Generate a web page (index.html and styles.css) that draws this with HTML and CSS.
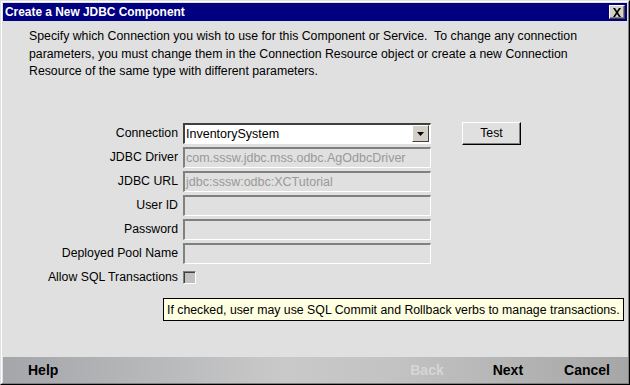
FILE: index.html
```html
<!DOCTYPE html>
<html>
<head>
<meta charset="utf-8">
<link rel="stylesheet" href="styles.css">
</head>
<body>
<div class="window">
  <div class="titlebar">
    <span class="title">Create a New JDBC Component</span>
    <span class="close"><svg width="10" height="9" viewBox="0 0 10 9"><path d="M1 0h2l2 3 2-3h2L6 4.5 9 9H7L5 6 3 9H1l3-4.5z" fill="#000"/></svg></span>
  </div>
  <div class="content">
    <p class="desc">Specify which Connection you wish to use for this Component or Service.&nbsp; To change any connection parameters, you must change them in the Connection Resource object or create a new Connection Resource of the same type with different parameters.</p>
    <div class="form">
      <label class="lbl">Connection</label>
      <div class="field combo"><span class="val">InventorySystem</span><span class="arrow"><svg width="7" height="4" viewBox="0 0 7 4"><path d="M0 0h7L3.5 4z" fill="#000"/></svg></span></div>
      <div class="btncell"><button class="btn">Test</button></div>

      <label class="lbl">JDBC Driver</label>
      <div class="field dis"><span class="val">com.sssw.jdbc.mss.odbc.AgOdbcDriver</span></div>
      <div></div>

      <label class="lbl">JDBC URL</label>
      <div class="field dis"><span class="val">jdbc:sssw:odbc:XCTutorial</span></div>
      <div></div>

      <label class="lbl">User ID</label>
      <div class="field dis"></div>
      <div></div>

      <label class="lbl">Password</label>
      <div class="field dis"></div>
      <div></div>

      <label class="lbl">Deployed Pool Name</label>
      <div class="field dis"></div>
      <div></div>

      <label class="lbl">Allow SQL Transactions</label>
      <div class="checkcell"><span class="check"></span></div>
      <div></div>
    </div>
    <div class="tooltip">If checked, user may use SQL Commit and Rollback verbs to manage transactions.</div>
  </div>
  <div class="footer">
    <span class="fbtn help">Help</span>
    <span class="spacer"></span>
    <span class="fbtn back">Back</span>
    <span class="fbtn next">Next</span>
    <span class="fbtn cancel">Cancel</span>
  </div>
</div>
</body>
</html>
```

FILE: styles.css
```css
* { box-sizing: border-box; }
html, body { margin: 0; padding: 0; }
body {
  width: 630px;
  height: 385px;
  overflow: hidden;
  font-family: "Liberation Sans", Arial, sans-serif;
  background: #e0e0e0;
}
.window {
  width: 630px;
  height: 385px;
  display: flex;
  flex-direction: column;
  background: #e0e0e0;
  border-top: 1px solid #e0e0e0;
  border-left: 1px solid #e0e0e0;
  border-right: 1px solid #000;
  border-bottom: 1px solid #000;
  position: relative;
}
.window::before {
  content: "";
  position: absolute;
  inset: 0;
  border-top: 1px solid #fff;
  border-left: 1px solid #fff;
  border-right: 1px solid #808080;
  border-bottom: 1px solid #808080;
  pointer-events: none;
}
.titlebar {
  margin: 2px 2px 0 2px;
  height: 18px;
  background: #000080;
  display: flex;
  align-items: center;
  padding-left: 2px;
  padding-right: 2px;
}
.title {
  color: #fff;
  font-weight: bold;
  font-size: 11.9px;
  flex: 1;
}
.close {
  width: 16px;
  height: 14px;
  background: #d4d0c8;
  border-top: 1px solid #fff;
  border-left: 1px solid #fff;
  border-right: 1px solid #404040;
  border-bottom: 1px solid #404040;
  box-shadow: inset -1px -1px 0 #808080;
  display: flex;
  align-items: center;
  justify-content: center;
}
.close svg { display: block; margin-left: -1px; }
.content {
  flex: 1;
  position: relative;
  padding: 7px 0 0 0;
}
.desc {
  margin: 0 0 0 28px;
  width: 580px;
  font-size: 12.3px;
  line-height: 17.5px;
  color: #000;
}
.form {
  margin-top: 42px;
  display: grid;
  grid-template-columns: 177px 248px auto;
  grid-auto-rows: 21px;
  column-gap: 5px;
  row-gap: 3px;
  align-items: center;
}
.lbl {
  text-align: right;
  font-size: 12.3px;
  color: #000;
}
.field {
  height: 21px;
  border-top: 2px solid #404040;
  border-left: 2px solid #404040;
  border-right: 1px solid #fff;
  border-bottom: 1px solid #fff;
  display: flex;
  align-items: center;
  font-size: 12.5px;
  padding-left: 1px;
}
.field.dis { background: #e0e0e0; color: #999; border-top-color: #808080; border-left-color: #808080; }
.field.combo { background: #fff; color: #000; justify-content: space-between; padding-right: 1px; }
.arrow {
  width: 17px;
  height: 17px;
  background: #d4d0c8;
  border-top: 1px solid #fff;
  border-left: 1px solid #fff;
  border-right: 1px solid #404040;
  border-bottom: 1px solid #404040;
  display: flex;
  align-items: center;
  justify-content: center;
}
.arrow svg { display: block; }
.btncell { padding-left: 26px; display: flex; }
.btn {
  width: 59px;
  height: 23px;
  padding: 0;
  font-family: "Liberation Sans", Arial, sans-serif;
  font-size: 12.3px;
  color: #000;
  background: #e0e0e0;
  border-top: 1px solid #fff;
  border-left: 1px solid #fff;
  border-right: 1px solid #000;
  border-bottom: 1px solid #000;
  box-shadow: inset -1px -1px 0 #808080;
}
.checkcell { display: flex; align-items: center; }
.check {
  width: 13px;
  height: 13px;
  background: #c0c0c0;
  border-top: 1px solid #808080;
  border-left: 1px solid #808080;
  border-right: 1px solid #fff;
  border-bottom: 1px solid #fff;
  box-shadow: inset 1px 1px 0 #404040;
}
.tooltip {
  position: absolute;
  left: 162px;
  top: 277px;
  width: 461px;
  height: 23px;
  background: #ffffe1;
  border: 1px solid #000;
  font-size: 12.3px;
  color: #000;
  padding-left: 3px;
  display: flex;
  align-items: center;
  white-space: nowrap;
}
.footer {
  height: 26px;
  margin: 0 1px 1px 2px;
  background: linear-gradient(90deg, #a4a6a9 0%, #b8b9bb 25%, #c9c9c9 45%, #c3c3c3 62%, #a6a6a6 100%);
  display: flex;
  align-items: center;
  padding: 0 18px 0 25px;
  font-size: 14px;
  font-weight: bold;
}
.spacer { flex: 1; }
.fbtn { color: #000; }
.back { color: #d6d6d6; margin-right: 49px; }
.next { margin-right: 41px; }
```
